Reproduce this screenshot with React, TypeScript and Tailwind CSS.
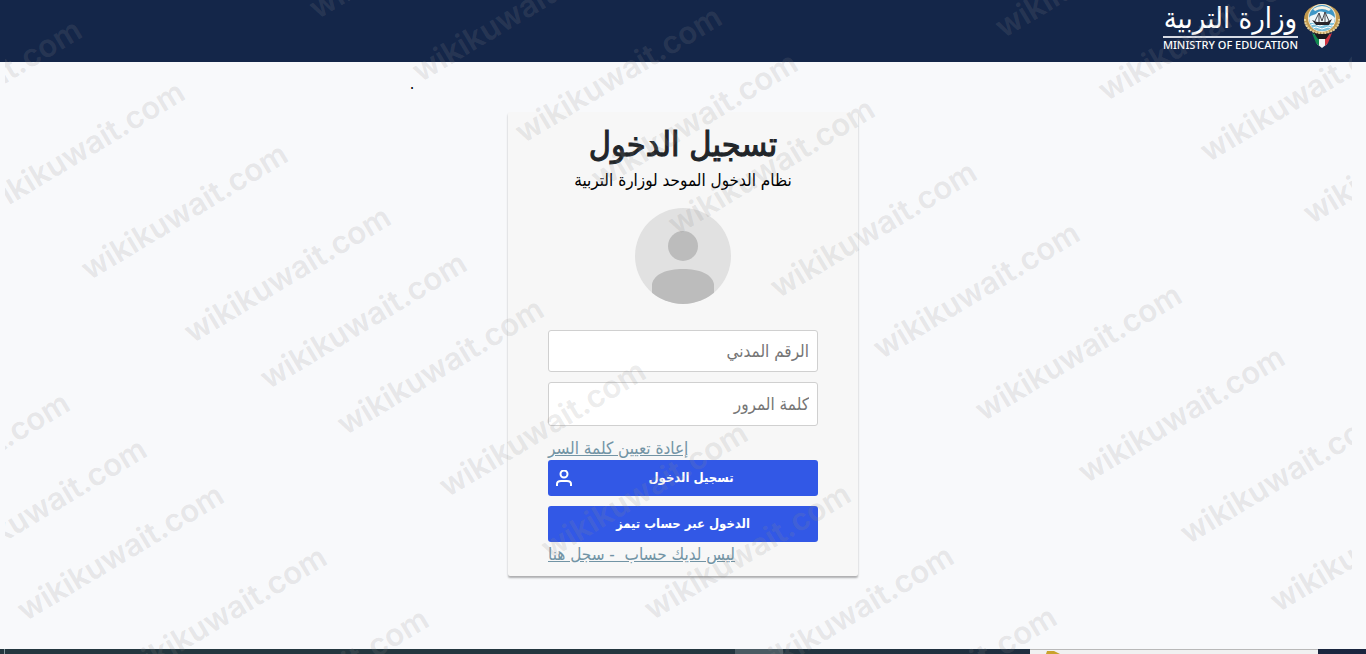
import React, { useState } from 'react';

interface IMark {
  left: number;
  top: number;
}

// left / baseline of every watermark stamp
const marks: IMark[] = [
  { left: -125, top: 153 },
  { left: -22, top: 215 },
  { left: 81, top: 277 },
  { left: 184, top: 340 },
  { left: 260, top: 386 },
  { left: 337, top: 432 },
  { left: 439, top: 494 },
  { left: 541, top: 556 },
  { left: 644, top: 617 },
  { left: 747, top: 679 },
  { left: 850, top: 740 },
  { left: 309, top: 16 },
  { left: 412, top: 79 },
  { left: 515, top: 140 },
  { left: 591, top: 186 },
  { left: 668, top: 232 },
  { left: 770, top: 295 },
  { left: 873, top: 356 },
  { left: 975, top: 418 },
  { left: 1078, top: 480 },
  { left: 1180, top: 541 },
  { left: 1270, top: 609 },
  { left: 995, top: 35 },
  { left: 1098, top: 98 },
  { left: 1200, top: 159 },
  { left: 1303, top: 221 },
  { left: -137, top: 526 },
  { left: -60, top: 572 },
  { left: 17, top: 618 },
  { left: 120, top: 680 },
  { left: 222, top: 742 },
];

function Emblem() {
  return (
    <svg className="w-9 h-11 shrink-0" viewBox="0 0 36 44" role="img" aria-label="Kuwait emblem">
      <path d="M10 29 L26 29 L23 40 L18 44 L13 40 Z" fill="#f4f4f4" />
      <path d="M8 29 L15 33 V42 L12 39 Z" fill="#10894f" />
      <path d="M28 29 L21 33 V42 L24 39 Z" fill="#cf3340" />
      <path d="M9 28 H27 L22 35 H14 Z" fill="#1b1b1f" />
      <ellipse cx="18" cy="15" rx="18" ry="15" fill="#c29a4e" />
      <path d="M1 15 C1 25 9 29 18 29 C27 29 35 25 35 15" fill="none" stroke="#e4cf9b" strokeWidth="2" strokeDasharray="2 1" />
      <circle cx="18" cy="14" r="14" fill="#f1ead6" />
      <circle cx="18" cy="14" r="13" fill="#3f97c6" />
      <path d="M5 14 C7 10 10 12 13 9 C16 6 21 8 23 10 C26 9 29 12 31 14 L30 19 H6 Z" fill="#eef6f9" />
      <path d="M9 5 Q18 -1 27 5 L25 7 Q18 3 11 7 Z" fill="#f7f3e4" />
      <path d="M6 19 H30 Q28 27 18 27 Q8 27 6 19 Z" fill="#7fc2dd" />
      <path d="M7 21 Q10 19 13 21 T19 21 T25 21 T30 21 M9 24 Q12 22 15 24 T21 24 T27 24" fill="none" stroke="#fff" />
      <path d="M8 16 L13 18 H23 L28 15 L25 21 H12 Z" fill="#28242a" />
      <path d="M15 18 V9 M21 18 V8 M11 17 L15 9 L18 17 M18 17 L21 8 L25 17" fill="none" stroke="#4b4a50" />
    </svg>
  );
}

function Header() {
  return (
    <header className="flex justify-end bg-[#142649] h-[62px] pt-1 pr-[26px] gap-1.5 text-white">
      <div className="flex flex-col items-center">
        <p className="h-8 text-[29px] leading-7 whitespace-nowrap" dir="rtl">وزارة التربية</p>
        <div className="h-[2px] w-full bg-[#d5dae4]" />
        <p className="text-[11px] leading-[14px] whitespace-nowrap font-medium font-['Noto_Sans',sans-serif]">MINISTRY OF EDUCATION</p>
      </div>
      <Emblem />
    </header>
  );
}

function Avatar() {
  return (
    <svg className="w-24 h-24 mx-auto" viewBox="0 0 96 96" aria-hidden="true">
      <clipPath id="avatar-clip">
        <circle cx="48" cy="48" r="48" />
      </clipPath>
      <circle cx="48" cy="48" r="48" fill="#e1e1e1" />
      <g clipPath="url(#avatar-clip)" fill="#bcbcbc">
        <circle cx="48" cy="38" r="15" />
        <path d="M17 96 V76 C19 66 32 61 48 61 C64 61 77 66 79 76 V96 Z" />
      </g>
    </svg>
  );
}

function LoginCard() {
  const [civilId, setCivilId] = useState<string>('');
  const [password, setPassword] = useState<string>('');
  return (
    <form
      className="flex flex-col w-[350px] max-w-full mx-auto px-10 pb-2.5 bg-[#f7f7f7] rounded-xs shadow-[0_2px_2px_rgba(0,0,0,0.3)]"
      onSubmit={(e) => e.preventDefault()}
    >
      <h1 className="pt-2 text-center text-[34px] leading-[48px] [-webkit-text-stroke:1px_#212529] whitespace-nowrap text-[#212529]" dir="rtl">تسجيل الدخول</h1>
      <p className="text-center text-[17px] leading-6 whitespace-nowrap text-black" dir="rtl">نظام الدخول الموحد لوزارة التربية</p>
      <div className="pt-4 pb-[26px]">
        <Avatar />
      </div>
      <input
        type="text"
        dir="rtl"
        aria-label="الرقم المدني"
        placeholder="الرقم المدني"
        className="h-[42px] px-2 mb-2.5 text-[17px] bg-white border border-[#d0d0d0] rounded-[3px] placeholder:text-[#757575]"
        value={civilId}
        onChange={(e) => setCivilId(e.target.value)}
      />
      <input
        type="password"
        dir="rtl"
        aria-label="كلمة المرور"
        placeholder="كلمة المرور"
        className="h-11 px-2 mb-2.5 text-[17px] bg-white border border-[#d0d0d0] rounded-[3px] placeholder:text-[#757575]"
        value={password}
        onChange={(e) => setPassword(e.target.value)}
      />
      <a href="#reset" dir="rtl" className="self-start text-[17px] leading-6 underline whitespace-nowrap text-[#7294a5]">إعادة تعيين كلمة السر</a>
      <button type="submit" className="flex items-center h-9 px-2 mb-2.5 bg-[#3258e6] rounded-[3px] text-[13px] font-bold text-white">
        <svg className="w-4 h-4" viewBox="0 0 16 16" fill="none" stroke="#fff" strokeWidth="2" aria-hidden="true">
          <ellipse cx="8" cy="4" rx="3.5" ry="3.5" />
          <path d="M1 16 V14 C1 12 3 11 5 11 H11 C13 11 15 12 15 14 V16" />
        </svg>
        <span className="flex-1" dir="rtl">تسجيل الدخول</span>
      </button>
      <button type="button" dir="rtl" className="h-9 bg-[#3258e6] rounded-[3px] text-[13px] font-bold text-white">الدخول عبر حساب تيمز</button>
      <a href="#register" dir="rtl" className="self-start text-[17px] leading-6 underline whitespace-nowrap text-[#7294a5]">
        ليس لديك حساب&nbsp; - سجل هنا
      </a>
    </form>
  );
}

function Taskbar() {
  return (
    <footer className="grid grid-cols-[4fr_1fr_730fr_48fr_247fr_288fr_48fr] h-[5px] bg-linear-to-r from-[#24373f] from-50% to-[#1a253f]">
      <div />
      <div className="bg-[#81959b]" />
      <div />
      <div className="bg-[#4b5b63]" />
      <div />
      <div className="pl-4 bg-[#f1f1f1] border-t border-[#b9b9b9] overflow-hidden">
        <svg className="w-3.5 h-1" viewBox="0 0 14 4" aria-hidden="true">
          <path d="M0 4 L1 1 H8 L14 4 Z" fill="#c9a22c" />
        </svg>
      </div>
      <div />
    </footer>
  );
}

function Watermark() {
  return (
    <div className="absolute inset-y-0 left-[5px] right-3.5 overflow-hidden pointer-events-none select-none" aria-hidden="true">
      {marks.map(({ left, top }) => (
        <span
          key={`${left}-${top}`}
          className="absolute -mt-6 ml-1.5 origin-bottom-left -rotate-31 text-[31px] leading-8 font-semibold whitespace-nowrap text-[#8c8c8c]/18 font-['Inter',sans-serif]"
          style={{ left, top }}
        >
          wikikuwait.com
        </span>
      ))}
    </div>
  );
}

function App() {
  return (
    <div className="relative flex flex-col min-h-screen overflow-hidden bg-[#f8f9fb] font-['DejaVu_Sans_Condensed','DejaVu_Sans',sans-serif]">
      <Header />
      <main className="flex-1">
        <p className="h-[50px] pl-[30%] pt-2.5 text-base leading-6 text-black">.</p>
        <LoginCard />
      </main>
      <Taskbar />
      <Watermark />
    </div>
  );
}

export default App;
